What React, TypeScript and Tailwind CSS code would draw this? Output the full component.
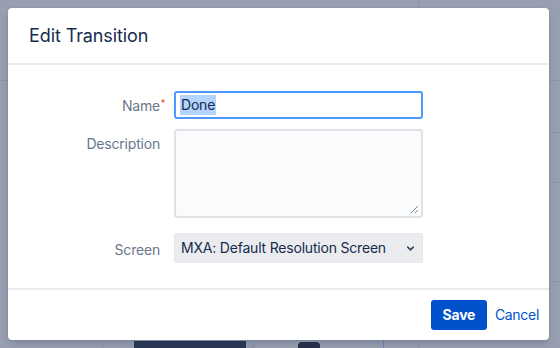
import { ChevronDown } from 'lucide-react'

const font = { fontFamily: 'Inter, "Liberation Sans", sans-serif' }

function Label({ text, required }: { text: string; required?: boolean }) {
  return (
    <label className="relative block text-right text-sm tracking-[-0.2px] text-[#6b778c]">
      {text}
      {required && (
        <span className="absolute -right-[5px] top-[1px] text-[#de350b] text-[9px]">*</span>
      )}
    </label>
  )
}

export default function App() {
  return (
    <div
      className="relative w-[560px] h-[348px] overflow-hidden bg-[#989fb0] p-2"
      style={font}
    >
      {/* page behind the overlay */}
      <div className="absolute left-0 top-[80px] w-[560px] h-px bg-[#8d94a6]" />
      <div className="absolute right-0 top-[132px] w-[20px] h-px bg-[#8d94a6]" />
      <div className="absolute right-0 top-[182px] w-[20px] h-px bg-[#8d94a6]" />
      <div className="absolute right-0 top-[281px] w-[20px] h-px bg-[#8d94a6]" />
      <div className="absolute left-[418px] top-0 w-px h-[348px] bg-[#8d94a6]" />
      <div className="absolute left-[102px] top-[340px] w-px h-[8px] bg-[#8d94a6]" />
      <div className="absolute left-[383px] top-[340px] w-px h-[8px] bg-[#6d86b8]" />
      <div className="absolute left-[134px] top-[341px] w-[112px] h-[7px] bg-[#2b3957]" />
      <div className="absolute left-[250px] top-[343px] w-0 h-0 border-y-[4px] border-y-transparent border-r-[5px] border-r-[#8e95a6]" />
      <div className="absolute left-[298px] top-[342px] w-[22px] h-[6px] rounded-t-sm bg-[#283049]" />

      {/* dialog */}
      <div className="relative flex flex-col w-[541px] h-[332px] bg-white rounded-[4px] shadow-[0_0_1px_rgba(9,30,66,0.3),0_4px_8px_-2px_rgba(9,30,66,0.25)]">
        <div className="h-[57px] flex items-center px-[21px] border-b-2 border-[#ebecf0]">
          <h2 className="text-[18px] text-[#172b4d] tracking-[-0.1px]">Edit Transition</h2>
        </div>

        <div className="flex-1 pt-[26px] pl-[21px]">
          <div className="grid grid-cols-[131px_249px] gap-x-[14px] items-start">
            <div className="pt-[5px]"><Label text="Name" required /></div>
            <div className="h-[28px] rounded-[3px] border-2 border-[#4c9aff] bg-white flex items-center px-[4px]">
              <span className="text-sm tracking-[-0.2px] text-[#172b4d] bg-[#b3d4fc] px-px leading-[20px]">Done</span>
            </div>

            <div className="pt-[15px]"><Label text="Description" /></div>
            <div className="mt-[10px] relative h-[89px] rounded-[3px] border-2 border-[#dfe1e6] bg-[#fafbfc]">
              <svg className="absolute right-[2px] bottom-[2px]" width="9" height="9" viewBox="0 0 9 9">
                <path d="M8 1 L1 8 M8 5 L5 8" stroke="#7a7f8a" strokeWidth="1" />
              </svg>
            </div>

            <div className="pt-[22px]"><Label text="Screen" /></div>
            <div className="mt-[15px] h-[30px] rounded-[3px] bg-[#ebecf0] border border-[#e4e6eb] flex items-center justify-between pl-[6px] pr-[6px]">
              <span className="text-sm tracking-[-0.2px] text-[#172b4d]">MXA: Default Resolution Screen</span>
              <ChevronDown size={11} strokeWidth={3.5} className="text-[#344563]" />
            </div>
          </div>
        </div>

        <div className="h-[52px] border-t-2 border-[#ebecf0] flex items-center justify-end gap-[8px] pr-[10px]">
          <button className="h-[30px] w-[56px] rounded-[3px] bg-[#0052cc] text-white text-sm font-bold tracking-[-0.2px]">Save</button>
          <button className="h-[30px] text-sm tracking-[-0.3px] text-[#0052cc]">Cancel</button>
        </div>
      </div>
    </div>
  )
}
